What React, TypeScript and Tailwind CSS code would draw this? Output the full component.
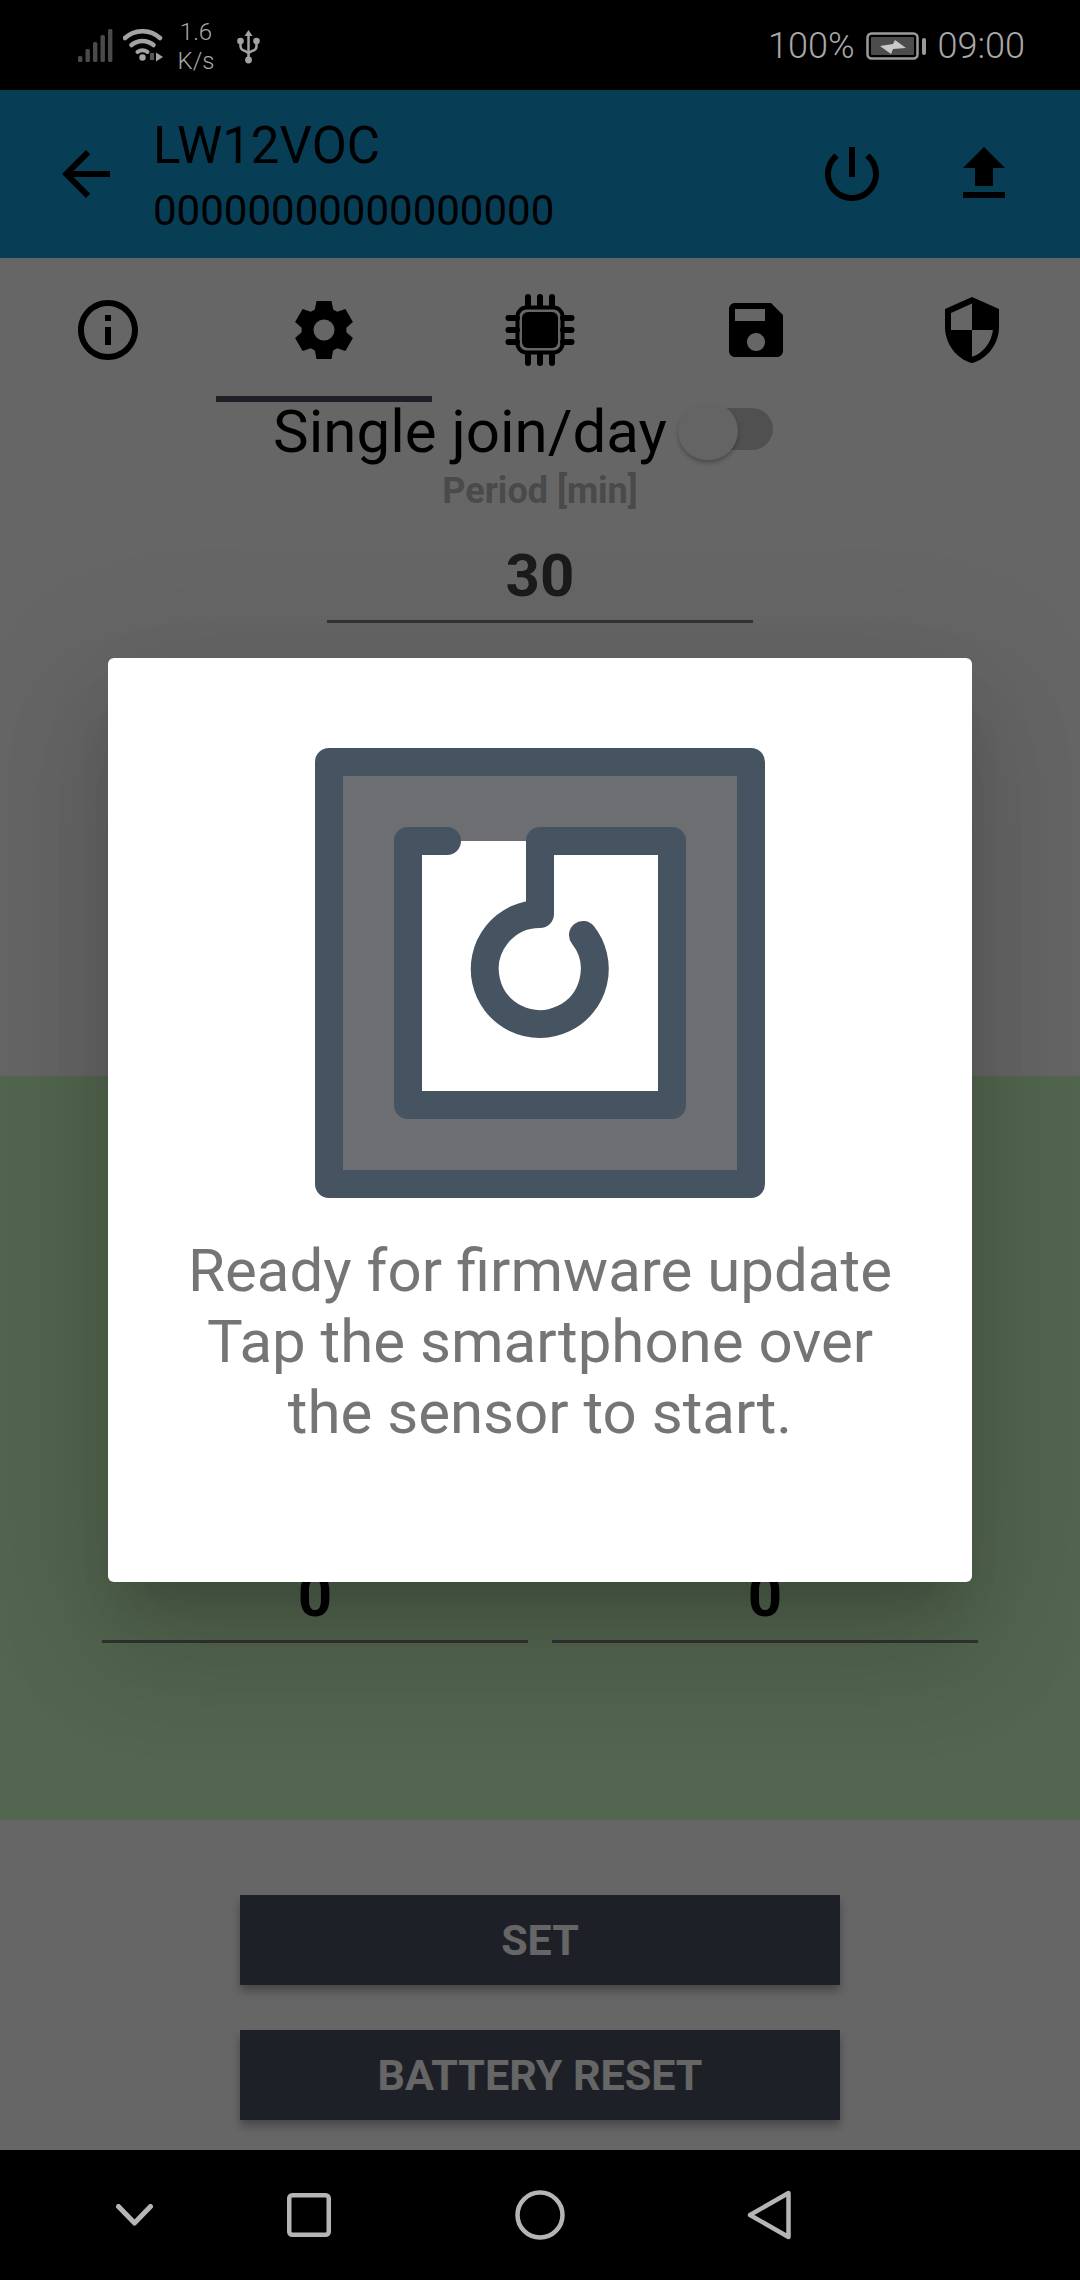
const gearPath = (() => {
  const cx = 30, cy = 30;
  const pts: string[] = [];
  for (let i = 0; i < 6; i++) {
    const a = i * 60 - 90;
    for (const [r, d] of [[22.5, -24], [30, -14.5], [30, 14.5], [22.5, 24]] as const) {
      const t = ((a + d) * Math.PI) / 180;
      pts.push(`${(cx + r * Math.cos(t)).toFixed(2)} ${(cy + r * Math.sin(t)).toFixed(2)}`);
    }
  }
  return `M${pts.join("L")}Z`;
})();

function StatusBar() {
  return (
    <div className="h-[90px] shrink-0 bg-black flex items-center pl-[78px] pr-[55px] pt-[2px] text-[#a8a8a8] font-light">
      <svg width="36" height="34" viewBox="0 0 36 34" className="mt-[-1px]">
        <rect x="0" y="27" width="4.4" height="6" rx="1.5" fill="#4a4a4a" />
        <rect x="7.5" y="20" width="4.4" height="13" rx="1.5" fill="#4a4a4a" />
        <rect x="15" y="13" width="4.4" height="20" rx="1.5" fill="#4a4a4a" />
        <rect x="22.5" y="6" width="4.4" height="27" rx="1.5" fill="#4a4a4a" />
        <rect x="30" y="0" width="4.4" height="33" rx="1.5" fill="#4a4a4a" />
      </svg>
      <svg width="42" height="34" viewBox="0 0 42 34" className="ml-[9px]" fill="none">
        <path d="M2 9A26 26 0 0 1 37 9" stroke="#a3a3a3" strokeWidth="4.5" strokeLinecap="round" />
        <path d="M8.5 16A17 17 0 0 1 30.5 16" stroke="#a3a3a3" strokeWidth="4.5" strokeLinecap="round" />
        <path d="M14.5 23A9 9 0 0 1 24.5 23" stroke="#a3a3a3" strokeWidth="4" strokeLinecap="round" />
        <circle cx="19.5" cy="28.5" r="3.2" fill="#a3a3a3" />
        <path d="M27 31V24L31 24V31Z" fill="#555" />
        <path d="M33 23.5L40 28L33 32.5Z" fill="#a3a3a3" />
      </svg>
      <div className="ml-[12px] w-[38px] flex flex-col items-center text-[24px] leading-[29px] mt-[1px]">
        <span>1.6</span>
        <span>K/s</span>
      </div>
      <svg width="24" height="36" viewBox="0 0 24 36" className="ml-[22px]" fill="none">
        <path d="M11.5 2L7.5 8H15.5Z" fill="#a3a3a3" />
        <path d="M11.5 6V32" stroke="#a3a3a3" strokeWidth="2.5" />
        <path d="M3.5 13V18Q3.5 22 8 23L11.5 25L15 23Q19.5 22 19.5 18V13" stroke="#a3a3a3" strokeWidth="2.5" />
        <circle cx="3.5" cy="13" r="3.3" fill="#a3a3a3" />
        <circle cx="19.5" cy="13" r="3.3" fill="#a3a3a3" />
        <circle cx="11.5" cy="32" r="3.4" fill="#a3a3a3" />
      </svg>
      <div className="ml-auto flex items-center text-[36px] leading-[42px]">
        <span>100%</span>
        <svg width="60" height="28" viewBox="0 0 60 28" className="ml-[11px]" fill="none">
          <rect x="1.5" y="1.5" width="50" height="25" rx="4" stroke="#9a9a9a" strokeWidth="2.5" />
          <rect x="5" y="5" width="43" height="18" rx="1" fill="#4c4c4c" />
          <path d="M14 14L27 12L29 8L40 16L27 17L25 22Z" fill="#c9c9c9" />
          <rect x="56" y="6" width="4" height="17" rx="2" fill="#9a9a9a" />
        </svg>
        <span className="ml-[12px]">09:00</span>
      </div>
    </div>
  );
}

function Icon({ d }: { d: string }) {
  return (
    <svg width="72" height="72" viewBox="0 0 24 24" fill="#000">
      <path d={d} />
    </svg>
  );
}

function Header() {
  return (
    <div className="h-[168px] shrink-0 bg-[#129bd7] flex items-center pl-[50px] pr-[60px] text-black">
      <Icon d="M20 11H7.83l5.59-5.59L12 4l-8 8 8 8 1.41-1.41L7.83 13H20v-2z" />
      <div className="ml-[31px] flex flex-col">
        <span className="text-[51px] leading-[73px]">LW12VOC</span>
        <span className="text-[42px] leading-[57px]">00000000000000000</span>
      </div>
      <div className="ml-auto flex items-center gap-[60px]">
        <Icon d="M13 3h-2v10h2V3zm4.83 2.17l-1.42 1.42C17.99 7.86 19 9.81 19 12c0 3.87-3.13 7-7 7s-7-3.13-7-7c0-2.19 1.01-4.14 2.58-5.42L6.17 5.17C4.23 6.82 3 9.26 3 12c0 4.97 4.03 9 9 9s9-4.03 9-9c0-2.74-1.23-5.18-3.17-6.83z" />
        <Icon d="M9 16h6v-6h4l-7-7-7 7h4zm-4 2h14v2H5z" />
      </div>
    </div>
  );
}

function Tabs() {
  return (
    <div className="h-[144px] shrink-0 grid grid-cols-5">
      <div className="pt-[36px] flex justify-center">
        <Icon d="M11 7h2v2h-2zm0 4h2v6h-2zm1-9C6.48 2 2 6.48 2 12s4.48 10 10 10 10-4.48 10-10S17.52 2 12 2zm0 18c-4.41 0-8-3.59-8-8s3.59-8 8-8 8 3.59 8 8-3.59 8-8 8z" />
      </div>
      <div className="pt-[36px] flex justify-center border-b-[6px] border-[#4b5061]">
        <svg width="72" height="72" viewBox="-6 -6 72 72" fill="#000">
          <path fillRule="evenodd" d={`${gearPath}M30 19.5a10.5 10.5 0 1 0 0 21a10.5 10.5 0 1 0 0-21Z`} />
        </svg>
      </div>
      <div className="pt-[36px] flex justify-center">
        <svg width="72" height="74" viewBox="0 0 72 74" fill="none" className="mt-[-1px]">
          <g stroke="#000" strokeWidth="6" strokeLinecap="round">
            <path d="M24 4V13M36 4V13M48 4V13M24 61V70M36 61V70M48 61V70" />
            <path d="M4.5 25H13M4.5 37H13M4.5 49H13M59 25H67.5M59 37H67.5M59 49H67.5" />
          </g>
          <rect x="13.5" y="14.5" width="45" height="45" rx="9" stroke="#000" strokeWidth="4" />
          <rect x="18" y="19" width="36" height="36" rx="6" fill="#000" />
        </svg>
      </div>
      <div className="pt-[36px] flex justify-center">
        <Icon d="M17 3H5c-1.11 0-2 .9-2 2v14c0 1.1.89 2 2 2h14c1.1 0 2-.9 2-2V7l-4-4zm-5 16c-1.66 0-3-1.34-3-3s1.34-3 3-3 3 1.34 3 3-1.34 3-3 3zm3-10H5V5h10v4z" />
      </div>
      <div className="pt-[36px] flex justify-center">
        <Icon d="M12 1L3 5v6c0 5.55 3.84 10.74 9 12 5.16-1.26 9-6.45 9-12V5l-9-4zm0 10.99h7c-.53 4.12-3.28 7.79-7 8.94V12H5V6.3l7-3.11v8.8z" />
      </div>
    </div>
  );
}

function Switch() {
  return (
    <div className="relative w-[129px] h-[60px] ml-[11px]">
      <div className="absolute left-[6px] right-[34px] top-[6px] h-[42px] rounded-full bg-[#c8c8c8]" />
      <div className="absolute left-0 top-0 w-[60px] h-[58px] rounded-full bg-[#fafafa] shadow-[0_3px_4px_rgba(0,0,0,0.25)]" />
    </div>
  );
}

function NfcGlyph() {
  return (
    <svg width="450" height="450" viewBox="0 0 450 450" fill="none">
      <rect x="14" y="14" width="422" height="422" fill="#6c6e72" stroke="#465361" strokeWidth="28" strokeLinejoin="round" />
      <rect x="93" y="93" width="264" height="264" fill="#fff" />
      <path
        d="M93 93H132M225 93H357V357H93V93M225 93V166A55 55 0 1 0 268 187"
        stroke="#465361"
        strokeWidth="28"
        strokeLinecap="round"
        strokeLinejoin="round"
      />
    </svg>
  );
}

function Dialog() {
  return (
    <div className="w-[864px] h-[924px] bg-white rounded-[6px] flex flex-col items-center pt-[90px] shadow-[0_33px_45px_-21px_rgba(0,0,0,0.15),0_72px_114px_9px_rgba(0,0,0,0.1),0_27px_138px_24px_rgba(0,0,0,0.09)]">
      <NfcGlyph />
      <p className="mt-[37px] text-center text-[60px] leading-[71px] text-[#757575]">
        Ready for firmware update
        <br />
        Tap the smartphone over
        <br />
        the sensor to start.
      </p>
    </div>
  );
}

function Field({ value }: { value: string }) {
  return (
    <div className="h-[82px] border-b-[3px] border-[#808080] text-center text-[60px] leading-[70px] font-bold text-black">
      {value}
    </div>
  );
}

function NavBar() {
  return (
    <div className="h-[130px] shrink-0 bg-black flex items-center pl-[116px]">
      <svg width="37" height="22" viewBox="0 0 37 22" fill="none">
        <path d="M2.5 2.5L18.5 19L34.5 2.5" stroke="#b5b5b5" strokeWidth="5" strokeLinecap="round" strokeLinejoin="round" />
      </svg>
      <svg width="44" height="44" viewBox="0 0 44 44" fill="none" className="ml-[134px]">
        <rect x="2.25" y="2.25" width="39.5" height="39.5" rx="3" stroke="#b5b5b5" strokeWidth="4.5" />
      </svg>
      <svg width="50" height="50" viewBox="0 0 50 50" fill="none" className="ml-[184px]">
        <circle cx="25" cy="25" r="22.5" stroke="#b5b5b5" strokeWidth="4.5" />
      </svg>
      <svg width="44" height="50" viewBox="0 0 44 50" fill="none" className="ml-[182px]">
        <path d="M41.5 3V47L3 25Z" stroke="#b5b5b5" strokeWidth="4.5" strokeLinejoin="round" />
      </svg>
    </div>
  );
}

export default function App() {
  return (
    <div className="w-[1080px] h-[2280px] flex flex-col overflow-hidden font-['Roboto',sans-serif]">
      <StatusBar />
      <div className="relative flex-1 flex flex-col bg-white">
        <Header />
        <Tabs />
        <div className="flex items-center justify-center h-[60px] text-[60px] leading-[60px] text-black">
          <span>Single join/day</span>
          <Switch />
        </div>
        <div className="mt-[8px] text-center text-[36px] leading-[42px] font-bold text-[#b9b9b9]">Period [min]</div>
        <div className="mt-[29px] mx-auto w-[426px] h-[82px] border-b-[3px] border-[#808080] text-center text-[60px] leading-[70px] font-bold text-[#444444]">
          30
        </div>
        <div className="mt-[453px] h-[744px] shrink-0 bg-[#cfffc5] flex flex-col justify-end pb-[177px] px-[102px]">
          <div className="grid grid-cols-2 gap-[24px]">
            <Field value="0" />
            <Field value="0" />
          </div>
        </div>
        <div className="mt-[75px] flex flex-col items-center gap-[45px]">
          <button className="w-[600px] h-[90px] bg-[#4b5061] text-white font-bold text-[43px] shadow-[0_6px_9px_rgba(0,0,0,0.3)]">
            SET
          </button>
          <button className="w-[600px] h-[90px] bg-[#4b5061] text-white font-bold text-[43px] shadow-[0_6px_9px_rgba(0,0,0,0.3)]">
            BATTERY RESET
          </button>
        </div>
        <div className="absolute inset-0 bg-black/60 flex items-center justify-center">
          <Dialog />
        </div>
      </div>
      <NavBar />
    </div>
  );
}
